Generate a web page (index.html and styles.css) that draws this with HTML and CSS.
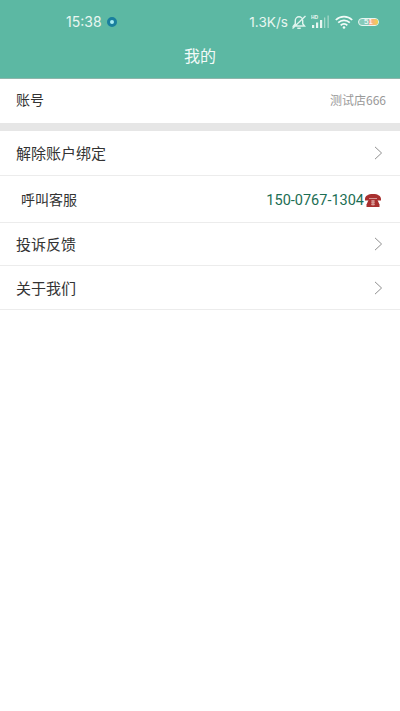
FILE: index.html
```html
<!DOCTYPE html>
<html lang="zh">
<head>
<meta charset="utf-8">
<title>我的</title>
<link rel="stylesheet" href="styles.css">
</head>
<body>
<header class="top">
  <div class="status">
    <div class="status-left">
      <span class="time">15:38</span>
      <span class="dot"></span>
    </div>
    <div class="status-right">
      <span class="speed">1.3K/s</span>
      <svg class="ic-bell" viewBox="0 0 16 16" width="16" height="16"><path d="M2.500 12h11l-1.800-2.200V6.500a3.700 3.700 0 0 0-7.400 0v3.300zM6.300 14.300h3.400M1.500 14.500 14.500 2" fill="none" stroke="#e0f4ee" stroke-width="1.400"/></svg>
      <svg class="ic-signal" viewBox="0 0 20 15" width="20" height="15"><text x="0" y="5" class="hd">HD</text><rect x="1" y="11" width="2.200" height="3" fill="#e8f6f1"/><rect x="5" y="8.500" width="2.200" height="5.500" fill="#e8f6f1"/><rect x="9" y="6" width="2.200" height="8" fill="#e8f6f1"/><rect x="13" y="3.500" width="1.300" height="10.500" fill="#a5d8c9"/><rect x="16.500" y="1.500" width="1.300" height="12.500" fill="#a5d8c9"/></svg>
      <svg class="ic-wifi" viewBox="0 0 18 14" width="18" height="14"><path d="M.8 5a11.800 11.800 0 0 1 16.400 0M3.200 7.700a8.200 8.200 0 0 1 11.600 0M5.700 10.300a4.500 4.500 0 0 1 6.600 0" fill="none" stroke="#f2fbf8" stroke-width="1.700"/><circle cx="9" cy="12.500" r="1.300" fill="#f2fbf8"/></svg>
      <span class="battery"><span class="batt-num">51</span><span class="batt-fill"></span></span>
    </div>
  </div>
  <h1 class="title">我的</h1>
</header>

<main>
  <div class="row row-account">
    <span class="label-small">账号</span>
    <span class="value">测试店666</span>
  </div>
  <div class="gap"></div>
  <div class="row row-unbind">
    <span class="label">解除账户绑定</span>
    <svg class="chev" viewBox="0 0 10 16" width="9" height="14"><path d="M1 1l7.500 7L1 15" fill="none" stroke="#8a8a8a" stroke-width="1.100"/></svg>
  </div>
  <div class="row row-call">
    <span class="label-small label-call">呼叫客服</span>
    <span class="phone">150-0767-1304<svg class="ic-phone" viewBox="0 0 18 15" width="18" height="15"><path d="M1 6C1 3 4 1 9 1s8 2 8 5v1.500h-4V5.500H5v2H1z" fill="#a8302f"/><path d="M5 6h8l2.500 5.500V14h-13v-2.500z" fill="#a8302f"/><path d="M7 8h4M7 9.800h4M7 11.600h4M8.300 7v5.500M9.700 7v5.500" stroke="#e9c4c0" stroke-width=".6" fill="none"/></svg></span>
  </div>
  <div class="row row-complain">
    <span class="label">投诉反馈</span>
    <svg class="chev" viewBox="0 0 10 16" width="9" height="14"><path d="M1 1l7.500 7L1 15" fill="none" stroke="#8a8a8a" stroke-width="1.100"/></svg>
  </div>
  <div class="row">
    <span class="label">关于我们</span>
    <svg class="chev" viewBox="0 0 10 16" width="9" height="14"><path d="M1 1l7.500 7L1 15" fill="none" stroke="#8a8a8a" stroke-width="1.100"/></svg>
  </div>
</main>
</body>
</html>
```

FILE: styles.css
```css
* { box-sizing: border-box; }
html, body { margin: 0; padding: 0; background: #fff; }
body {
  width: 400px;
  height: 711px;
  overflow: hidden;
  font-family: "Noto Sans CJK SC", "Noto Sans", sans-serif;
  color: #333;
}
.top {
  height: 79px;
  background: #5cb8a3;
  color: #fff;
  border-bottom: 1px solid #8fb5ab;
}
.status {
  height: 43px;
  padding: 0 21px 0 66px;
  display: flex;
  align-items: center;
  justify-content: space-between;
}
.status-left, .status-right { display: flex; align-items: center; }
.time {
  font-family: Inter, "Noto Sans", sans-serif;
  font-size: 14px;
  color: #e8f6f1;
}
.dot {
  width: 10px;
  height: 10px;
  margin-left: 5px;
  border-radius: 50%;
  background: #a8ecf2;
  border: 3px solid #1a7f9e;
}
.speed {
  font-family: Inter, "Noto Sans", sans-serif;
  font-size: 13.600px;
  color: #e8f6f1;
  margin-right: 3px;
}
.ic-bell { margin-right: 4px; }
.ic-signal { margin-right: 4px; }
.hd { font-family: "Liberation Sans", sans-serif; font-size: 5px; font-weight: 700; fill: #e8f6f1; }
.ic-wifi { margin-right: 5px; }
.battery {
  position: relative;
  width: 21px;
  height: 8px;
  border: 1px solid #e8f6f1;
  border-radius: 4px;
  display: block;
  overflow: hidden;
  background: rgba(255, 255, 255, .25);
}
.batt-num {
  position: absolute;
  left: 5px;
  top: -2px;
  font-family: "Liberation Sans", sans-serif;
  font-size: 8px;
  line-height: 10px;
  color: #fff;
  z-index: 1;
}
.batt-fill {
  position: absolute;
  right: 0;
  top: 0;
  bottom: 0;
  width: 9px;
  background: linear-gradient(90deg, #f4a0a0, #f1d24c);
}
.title {
  margin: 0;
  height: 24px;
  font-size: 16px;
  font-weight: 400;
  line-height: 24px;
  text-align: center;
  color: #f2faf8;
}
.row {
  height: 44px;
  padding: 0 17px 0 16px;
  display: flex;
  align-items: center;
  justify-content: space-between;
  border-bottom: 1px solid #ececec;
}
.row-account { height: 44px; border-bottom: 0; padding: 0 14px 4px 16px; }
.row-unbind { height: 45px; }
.row-call { height: 47px; padding-right: 18px; }
.row-complain { height: 43px; }
.gap { height: 8px; background: #e6e6e6; }
.label { font-size: 15px; line-height: 20px; color: #333; }
.label-small { font-size: 14px; line-height: 20px; color: #333; }
.label-call { margin-left: 5px; }
.value { font-size: 12px; color: #999; }
.phone {
  display: flex;
  align-items: center;
  padding-top: 2px;
  font-family: Roboto, "Noto Sans", sans-serif;
  font-size: 14.500px;
  color: #1c6e54;
}
```
